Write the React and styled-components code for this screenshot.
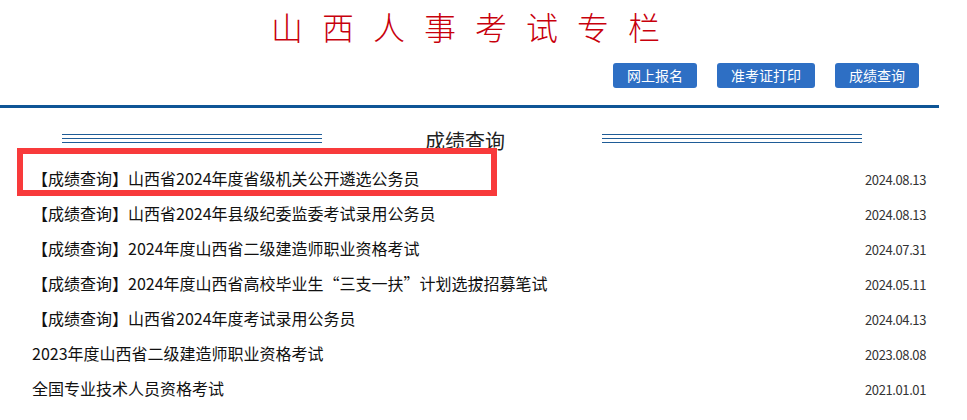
import styled, { createGlobalStyle } from 'styled-components';

const GlobalStyle = createGlobalStyle`
  body {
    margin: 0;
    background: #fff;
    font-family: "Noto Sans CJK SC", "Noto Sans", sans-serif;
  }
`;

const links = ['网上报名', '准考证打印', '成绩查询'];

const rows = [
  { tag: true, title: '山西省2024年度省级机关公开遴选公务员', date: '2024.08.13' },
  { tag: true, title: '山西省2024年县级纪委监委考试录用公务员', date: '2024.08.13' },
  { tag: true, title: '2024年度山西省二级建造师职业资格考试', date: '2024.07.31' },
  { tag: true, title: '2024年度山西省高校毕业生“三支一扶”计划选拔招募笔试', date: '2024.05.11' },
  { tag: true, title: '山西省2024年度考试录用公务员', date: '2024.04.13' },
  { tag: false, title: '2023年度山西省二级建造师职业资格考试', date: '2023.08.08' },
  { tag: false, title: '全国专业技术人员资格考试', date: '2021.01.01' },
];

export default function App() {
  return (
    <Page>
      <GlobalStyle />
      <Header>
        <Title>山西人事考试专栏</Title>
        <Nav>
          {links.map(l => (
            <NavButton key={l}>{l}</NavButton>
          ))}
        </Nav>
      </Header>
      <SectionBar>
        <TripleLine />
        <SectionTitle>成绩查询</SectionTitle>
        <TripleLine />
      </SectionBar>
      <List>
        {rows.map((r, i) => (
          <Row key={i}>
            <RowTitle>
              {r.tag ? '【成绩查询】' : ''}
              {r.title}
            </RowTitle>
            <RowDate>{r.date}</RowDate>
          </Row>
        ))}
      </List>
      <Highlight />
    </Page>
  );
}

const Page = styled.div`
  position: relative;
  width: 939px;
  height: 420px;
  overflow: hidden;
`;

const Header = styled.header`
  border-bottom: 3px solid #0e5596;
  padding-bottom: 17px;
`;

const Title = styled.h1`
  margin: 0;
  padding-left: 11px;
  text-align: center;
  font-size: 32px;
  font-weight: 300;
  line-height: 53px;
  letter-spacing: 19px;
  color: #c8000c;
`;

const Nav = styled.nav`
  display: flex;
  justify-content: flex-end;
  gap: 20px;
  margin-top: 10px;
  padding-right: 20px;
`;

const NavButton = styled.a`
  display: block;
  height: 25px;
  line-height: 25px;
  padding: 0 14px;
  border-radius: 3px;
  background: #2e6fc4;
  color: #fff;
  font-size: 14px;
  cursor: pointer;
`;

const SectionBar = styled.div`
  display: flex;
  align-items: flex-start;
  margin: 19px 0 0 62px;
  width: 800px;
`;

const TripleLine = styled.div`
  width: 260px;
  height: 9px;
  margin-top: 7px;
  background: linear-gradient(
    to bottom,
    #1f5c97 0 1px,
    transparent 1px 4px,
    #1f5c97 4px 5px,
    transparent 5px 8px,
    #1f5c97 8px 9px
  );
`;

const SectionTitle = styled.h2`
  width: 280px;
  margin: 0;
  padding-left: 6px;
  box-sizing: border-box;
  text-align: center;
  font-size: 20px;
  font-weight: 400;
  line-height: 28px;
  color: #222;
`;

const List = styled.ul`
  list-style: none;
  margin: 6px 0 0;
  padding: 0;
`;

const Row = styled.li`
  display: flex;
  justify-content: space-between;
  align-items: baseline;
  height: 35px;
  padding: 0 13px 0 32px;
`;

const RowTitle = styled.span`
  font-size: 16px;
  line-height: 35px;
  color: #111;
`;

const RowDate = styled.span`
  font-size: 13px;
  line-height: 35px;
  letter-spacing: -0.4px;
  color: #333;
`;

const Highlight = styled.div`
  position: absolute;
  left: 17px;
  top: 148px;
  width: 480px;
  height: 48px;
  box-sizing: border-box;
  border: 6px solid #f83a3b;
  pointer-events: none;
`;
